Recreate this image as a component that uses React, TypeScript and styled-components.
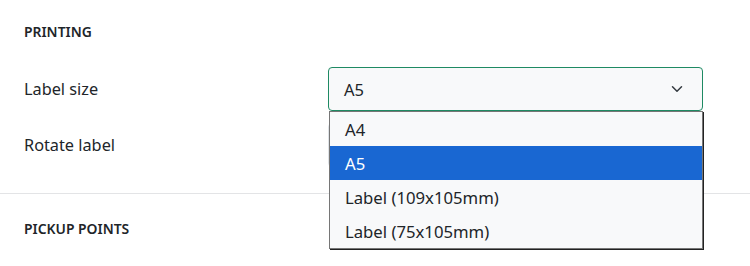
import React, { useState } from 'react';
import styled, { createGlobalStyle } from 'styled-components';

const OPTIONS = ['A4', 'A5', 'Label (109x105mm)', 'Label (75x105mm)'];

const App = () => {
  const [value] = useState('A5');

  return (
    <>
      <GlobalStyle />
      <Page>
        <Section>
          <Heading>PRINTING</Heading>
          <Rows>
            <FieldLabel>Label size</FieldLabel>
            <SelectWrap>
              <SelectBox>
                <span>{value}</span>
                <Chevron viewBox="0 0 24 24">
                  <path d="M6 9l6 6 6-6" />
                </Chevron>
              </SelectBox>
              <Popup>
                {OPTIONS.map((opt) => (
                  <Option key={opt} selected={opt === value}>{opt}</Option>
                ))}
              </Popup>
            </SelectWrap>
            <FieldLabel>Rotate label</FieldLabel>
            <Toggle />
          </Rows>
        </Section>
        <Section>
          <Heading>PICKUP POINTS</Heading>
        </Section>
      </Page>
    </>
  );
};

export default App;

const GlobalStyle = createGlobalStyle`
  body {
    margin: 0;
    background: #fff;
    font-family: "Noto Sans", "Open Sans", sans-serif;
    color: #212529;
  }
`;

const Page = styled.div`
  width: 750px;
`;

const Section = styled.section`
  padding: 22px 24px 26px;
  & + & {
    border-top: 1px solid #e3e4e6;
    padding-top: 25px;
  }
`;

const Heading = styled.div`
  font-size: 13.9px;
  line-height: 20px;
  font-weight: 600;
`;

const Rows = styled.div`
  display: grid;
  grid-template-columns: 304px 375px;
  grid-auto-rows: 44px;
  row-gap: 12px;
  margin-top: 25px;
  align-items: center;
`;

const FieldLabel = styled.div`
  font-size: 16.3px;
  line-height: 22px;
`;

const SelectWrap = styled.div`
  position: relative;
  height: 44px;
  z-index: 2;
`;

const SelectBox = styled.div`
  box-sizing: border-box;
  height: 44px;
  display: flex;
  align-items: center;
  justify-content: space-between;
  padding: 0 16px 0 15px;
  background: #f8f9fa;
  border: 1px solid #1e8a63;
  border-radius: 4px;
  font-size: 16.5px;
`;

const Chevron = styled.svg`
  width: 18px;
  height: 18px;
  fill: none;
  stroke: #343a40;
  stroke-width: 2;
  stroke-linecap: round;
  stroke-linejoin: round;
`;

const Popup = styled.div`
  position: absolute;
  top: 44px;
  left: 1px;
  width: 374px;
  box-sizing: border-box;
  background: #f8f9fa;
  border: 1px solid #767676;
  box-shadow: 1px 1px 0 #222;
`;

const Option = styled.div<{ selected?: boolean }>`
  height: 34px;
  display: flex;
  align-items: center;
  padding-left: 15px;
  font-size: 16.7px;
  background: ${({ selected }) => (selected ? '#1967d2' : 'transparent')};
  color: ${({ selected }) => (selected ? '#fff' : '#212529')};
`;

const Toggle = styled.div`
  height: 44px;
  width: 60px;
  box-sizing: border-box;
  border: 1px solid #dee2e6;
  border-radius: 4px;
`;
